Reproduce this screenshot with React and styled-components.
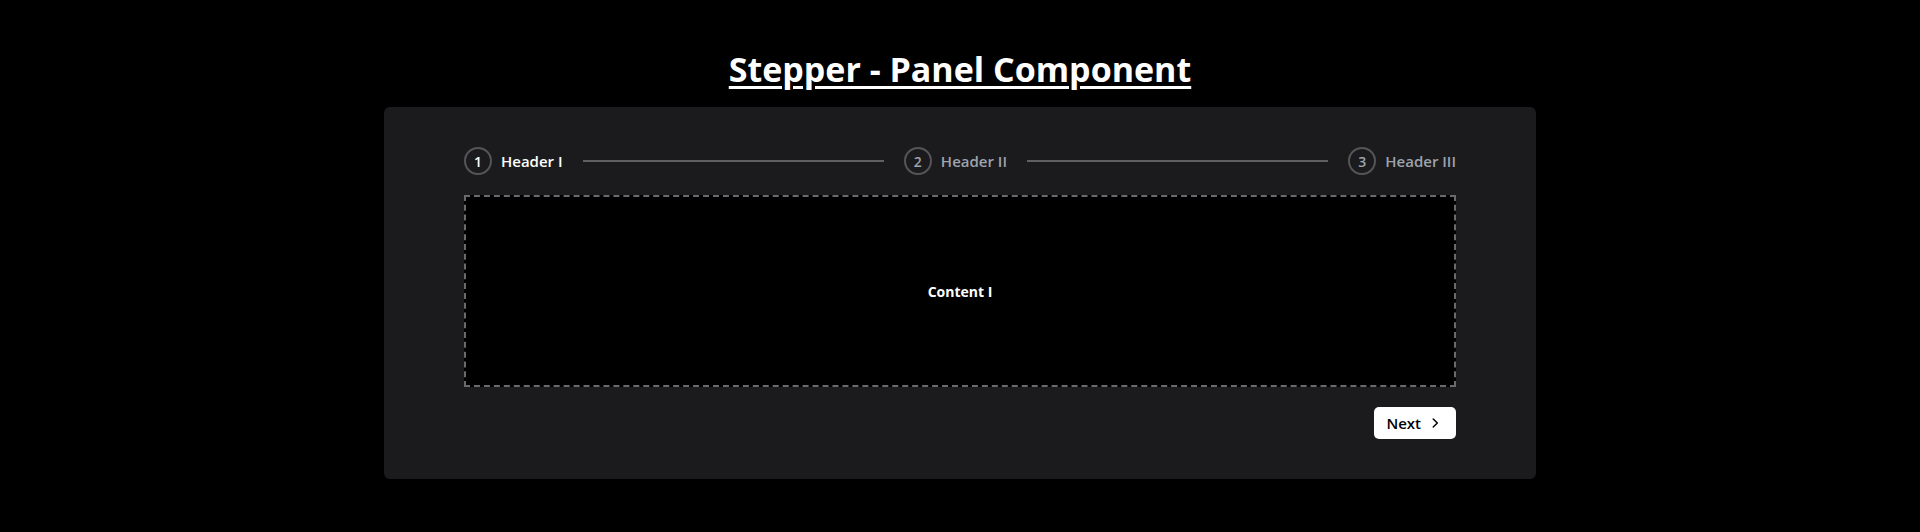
import { Fragment } from "react";
import styled, { createGlobalStyle } from "styled-components";

const GlobalStyle = createGlobalStyle`
  body {
    margin: 0;
    background: #000;
    font-family: "Open Sans", "Noto Sans", sans-serif;
    color: #fff;
  }
`;

const Page = styled.div`
  display: flex;
  flex-direction: column;
  align-items: center;
  padding-top: 43px;
`;

const Title = styled.h1`
  margin: 0 0 12px;
  font-size: 34px;
  font-weight: 700;
  line-height: 52px;
  text-decoration: underline;
  text-decoration-thickness: 3px;
  text-underline-offset: 4px;
`;

const Panel = styled.div`
  width: 1152px;
  box-sizing: border-box;
  padding: 40px 80px;
  background: #1b1b1d;
  border-radius: 6px;
  display: flex;
  flex-direction: column;
  gap: 20px;
`;

const Steps = styled.div`
  display: flex;
  align-items: center;
  gap: 20px;
`;

const Step = styled.div`
  display: flex;
  align-items: center;
  gap: 9px;
  color: ${(p) => (p.$active ? "#fff" : "#9ea3ad")};
  font-size: 15px;
  font-weight: 600;
`;

const Circle = styled.span`
  width: 24px;
  height: 24px;
  border: 2px solid #555558;
  border-radius: 50%;
  display: flex;
  align-items: center;
  justify-content: center;
  font-size: 14px;
`;

const Line = styled.div`
  flex: 1;
  height: 2px;
  background: #606063;
`;

const Content = styled.div`
  height: 188px;
  border: 2px dashed #6a6a6d;
  background: #000;
  display: flex;
  align-items: center;
  justify-content: center;
  font-size: 14px;
  font-weight: 700;
`;

const Footer = styled.div`
  display: flex;
  justify-content: flex-end;
`;

const Button = styled.button`
  height: 32px;
  padding: 0 14px 0 12px;
  border: none;
  border-radius: 5px;
  background: #fff;
  color: #000;
  font-family: inherit;
  font-size: 15px;
  font-weight: 600;
  display: flex;
  align-items: center;
  gap: 7px;
  cursor: pointer;
`;

const steps = ["Header I", "Header II", "Header III"];

export default function App() {
  return (
    <>
      <GlobalStyle />
      <Page>
        <Title>Stepper - Panel Component</Title>
        <Panel>
          <Steps>
            {steps.map((s, i) => (
              <Fragment key={s}>
                {i > 0 && <Line />}
                <Step $active={i === 0}>
                  <Circle>{i + 1}</Circle>
                  {s}
                </Step>
              </Fragment>
            ))}
          </Steps>
          <Content>Content I</Content>
          <Footer>
            <Button>
              Next
              <svg width="14" height="14" viewBox="0 0 24 24" fill="none" stroke="currentColor" strokeWidth="2.5" strokeLinecap="round" strokeLinejoin="round">
                <path d="M9 5l7 7-7 7" />
              </svg>
            </Button>
          </Footer>
        </Panel>
      </Page>
    </>
  );
}
